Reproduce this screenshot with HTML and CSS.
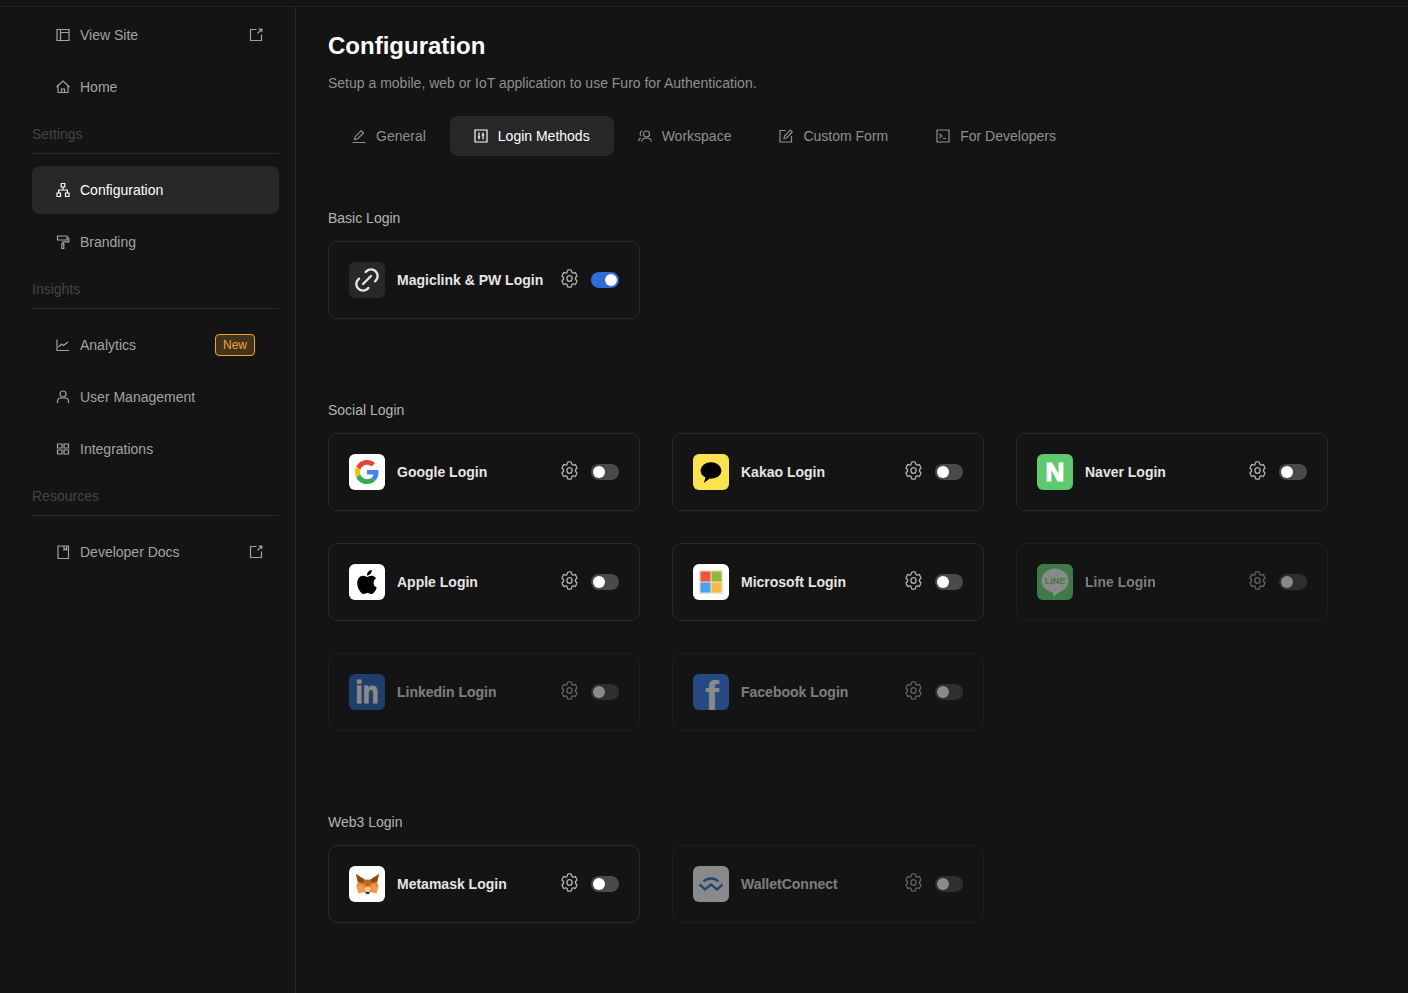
FILE: index.html
```html
<!DOCTYPE html>
<html lang="en">
<head>
  <meta charset="UTF-8" />
  <meta name="viewport" content="width=device-width, initial-scale=1.0" />
  <title>Configuration</title>
  <link rel="stylesheet" href="styles.css">
</head>
<body>
  <svg class="sprite" width="0" height="0">
    <symbol id="i-gear" viewBox="0 0 24 24">
      <g transform="translate(12 12) scale(.9 1) translate(-12 -12)">
        <path d="M9.594 3.94c.09-.542.56-.94 1.11-.94h2.593c.55 0 1.02.398 1.11.94l.213 1.281c.063.374.313.686.645.87.074.04.147.083.22.127.325.196.72.257 1.075.124l1.217-.456a1.125 1.125 0 0 1 1.37.49l1.296 2.247a1.125 1.125 0 0 1-.26 1.431l-1.003.827c-.293.241-.438.613-.43.992a7.723 7.723 0 0 1 0 .255c-.008.378.137.75.43.991l1.004.827c.424.35.534.955.26 1.43l-1.298 2.247a1.125 1.125 0 0 1-1.369.491l-1.217-.456c-.355-.133-.75-.072-1.076.124a6.47 6.47 0 0 1-.22.128c-.331.183-.581.495-.644.869l-.213 1.281c-.09.543-.56.94-1.11.94h-2.594c-.55 0-1.019-.398-1.11-.94l-.213-1.281c-.062-.374-.312-.686-.644-.87a6.52 6.52 0 0 1-.22-.127c-.325-.196-.72-.257-1.076-.124l-1.217.456a1.125 1.125 0 0 1-1.369-.49l-1.297-2.247a1.125 1.125 0 0 1 .26-1.431l1.004-.827c.292-.24.437-.613.43-.991a6.932 6.932 0 0 1 0-.255c.007-.38-.138-.751-.43-.992l-1.004-.827a1.125 1.125 0 0 1-.26-1.43l1.297-2.247a1.125 1.125 0 0 1 1.37-.491l1.216.456c.356.133.751.072 1.076-.124.072-.044.146-.086.22-.128.332-.183.582-.495.644-.869l.214-1.28Z"/>
        <circle cx="12" cy="12" r="3"/>
      </g>
    </symbol>
    <symbol id="i-ext" viewBox="0 0 16 16">
      <path d="M8.500 2.500H2.500v11h11V7.500"/>
      <path d="M9.500 6.500l4.300-4.300M10.800 2.200h3v3"/>
    </symbol>
  </svg>

  <div class="topline"></div>
  <div class="layout">
    <aside class="sidebar">
      <a class="nav-item">
        <svg class="ico lead" viewBox="0 0 16 16"><path d="M2 2.500h12v11H2zM5.500 2.500v11M5.500 5.500H14"/></svg>
        <span class="nav-text">View Site</span>
        <svg class="ico"><use href="#i-ext"/></svg>
      </a>
      <a class="nav-item">
        <svg class="ico lead" viewBox="0 0 16 16"><path d="M1.500 8L8 2l6.500 6M3 7v6.500h10V7M6.500 13.500V10h3v3.500"/></svg>
        <span class="nav-text">Home</span>
      </a>

      <div class="nav-label">Settings</div>
      <a class="nav-item active">
        <svg class="ico lead" viewBox="0 0 16 16"><path d="M6.200 1.500h3.600v3.500H6.200zM2 11h3.500v3.500H2zM10.500 11H14v3.500h-3.500zM3.700 11V8h8.600v3M8 5v3"/></svg>
        <span class="nav-text">Configuration</span>
      </a>
      <a class="nav-item">
        <svg class="ico lead" viewBox="0 0 16 16"><path d="M2.500 2h9.500v4H2.500zM12 4h1.800v3.800H7.800v2M6.800 10h2v4.500h-2z"/></svg>
        <span class="nav-text">Branding</span>
      </a>

      <div class="nav-label">Insights</div>
      <a class="nav-item">
        <svg class="ico lead" viewBox="0 0 16 16"><path d="M2 2.500v11h12"/><path d="M3.500 10l3-3 2 1.500L13 5"/></svg>
        <span class="nav-text">Analytics</span>
        <span class="badge">New</span>
      </a>
      <a class="nav-item">
        <svg class="ico lead" viewBox="0 0 16 16"><circle cx="8" cy="5" r="3"/><path d="M2.500 14v-1.500a3.500 3.500 0 0 1 3.500-3.500h4a3.500 3.500 0 0 1 3.500 3.500V14"/></svg>
        <span class="nav-text">User Management</span>
      </a>
      <a class="nav-item">
        <svg class="ico lead" viewBox="0 0 16 16"><path d="M2.500 3h4.500v4H2.500zM9 3h4.500v4H9zM2.500 9h4.500v4H2.500zM9 9h4.500v4H9z"/></svg>
        <span class="nav-text">Integrations</span>
      </a>

      <div class="nav-label">Resources</div>
      <a class="nav-item">
        <svg class="ico lead" viewBox="0 0 16 16"><path d="M3 2h10.500v12.500H3zM9 2v4l1.300-1 1.300 1V2"/></svg>
        <span class="nav-text">Developer Docs</span>
        <svg class="ico"><use href="#i-ext"/></svg>
      </a>
    </aside>

    <main class="main">
      <h1>Configuration</h1>
      <p class="subtitle">Setup a mobile, web or IoT application to use Furo for Authentication.</p>

      <div class="tabs">
        <a class="tab">
          <svg class="ico lead" viewBox="0 0 16 16"><path d="M1.500 14.500h13M3.500 11.500l.7-2.800 6-6 2.300 2.300-6 6z"/></svg>
          General
        </a>
        <a class="tab active">
          <svg class="ico lead" viewBox="0 0 16 16"><path d="M2 2h12v12H2zM6 4.500v7M10 4.500v7M4.800 9h2.400M8.800 7h2.400"/></svg>
          Login Methods
        </a>
        <a class="tab">
          <svg class="ico lead" viewBox="0 0 16 16"><circle cx="9.500" cy="6" r="3"/><path d="M4.500 13.500c.5-2.500 2.500-3.500 5-3.500s4.500 1 5 3.500M5.500 2.800a3 3 0 0 0-1.300 5.200M3.500 10c-1 .7-1.700 1.700-2 3"/></svg>
          Workspace
        </a>
        <a class="tab">
          <svg class="ico lead" viewBox="0 0 16 16"><path d="M8 2.500H2v11.500h11.500V8"/><path d="M6 10.500l.5-2.500 5.800-5.800 2 2-5.800 5.800z"/></svg>
          Custom Form
        </a>
        <a class="tab">
          <svg class="ico lead" viewBox="0 0 16 16"><path d="M2 2h12v12H2zM4.500 6l2.300 2-2.300 2M8 10.500h3"/></svg>
          For Developers
        </a>
      </div>

      <section class="group first">
        <h2>Basic Login</h2>
        <div class="card-grid">
          <div class="card">
            <span class="logo logo-link">
              <svg viewBox="0 0 24 24"><path d="M9 15l6-6M11 6l.463-.536a5 5 0 0 1 7.071 7.072l-.534.464M13 18l-.397.534a5.068 5.068 0 0 1-7.127 0a4.972 4.972 0 0 1 0-7.071l.524-.463"/></svg>
            </span>
            <span class="card-name">Magiclink &amp; PW Login</span>
            <svg class="gear"><use href="#i-gear"/></svg>
            <span class="switch on"></span>
          </div>
        </div>
      </section>

      <section class="group">
        <h2>Social Login</h2>
        <div class="card-grid">
          <div class="card">
            <span class="logo logo-white">
              <svg class="brand-24" viewBox="0 0 48 48">
                <path fill="#EA4335" d="M24 9.500c3.540 0 6.710 1.220 9.210 3.600l6.850-6.850C35.900 2.380 30.470 0 24 0 14.620 0 6.510 5.380 2.560 13.220l7.980 6.190C12.430 13.720 17.740 9.500 24 9.500z"/>
                <path fill="#4285F4" d="M46.980 24.550c0-1.570-.15-3.090-.38-4.550H24v9.020h12.940c-.58 2.960-2.260 5.480-4.780 7.180l7.730 6c4.510-4.180 7.090-10.360 7.090-17.650z"/>
                <path fill="#FBBC05" d="M10.530 28.590c-.48-1.450-.76-2.990-.76-4.590s.27-3.140.76-4.590l-7.980-6.190C.92 16.460 0 20.120 0 24c0 3.880.92 7.540 2.560 10.780l7.970-6.190z"/>
                <path fill="#34A853" d="M24 48c6.480 0 11.930-2.130 16.030-5.810l-7.730-6c-2.150 1.450-4.920 2.300-8.300 2.300-6.260 0-11.570-4.220-13.470-9.910l-7.980 6.190C6.510 42.620 14.620 48 24 48z"/>
              </svg>
            </span>
            <span class="card-name">Google Login</span>
            <svg class="gear"><use href="#i-gear"/></svg>
            <span class="switch"></span>
          </div>
          <div class="card">
            <span class="logo logo-kakao">
              <svg class="brand-24" viewBox="0 0 24 24">
                <ellipse cx="12" cy="10.500" rx="10.500" ry="8.300" fill="#000"/>
                <path d="M7 16l-2.200 7 6-4.500z" fill="#000"/>
              </svg>
            </span>
            <span class="card-name">Kakao Login</span>
            <svg class="gear"><use href="#i-gear"/></svg>
            <span class="switch"></span>
          </div>
          <div class="card">
            <span class="logo logo-naver">
              <svg viewBox="0 0 36 36"><text x="18" y="27" class="mark-n">N</text></svg>
            </span>
            <span class="card-name">Naver Login</span>
            <svg class="gear"><use href="#i-gear"/></svg>
            <span class="switch"></span>
          </div>

          <div class="card">
            <span class="logo logo-white">
              <svg class="brand-24" viewBox="0 0 24 24">
                <path fill="#000" d="M12.152 6.896c-.948 0-2.415-1.078-3.960-1.040-2.040.027-3.910 1.183-4.961 3.014-2.117 3.675-.546 9.103 1.519 12.090 1.013 1.454 2.208 3.090 3.792 3.039 1.520-.065 2.090-.987 3.935-.987 1.831 0 2.350.987 3.960.948 1.637-.026 2.676-1.480 3.676-2.948 1.156-1.688 1.636-3.325 1.662-3.415-.039-.013-3.182-1.221-3.220-4.857-.026-3.040 2.480-4.494 2.597-4.559-1.429-2.090-3.623-2.324-4.390-2.376-2-.156-3.675 1.090-4.610 1.090zM15.530 3.830c.843-1.012 1.400-2.427 1.245-3.830-1.207.052-2.662.805-3.532 1.818-.780.896-1.454 2.338-1.273 3.714 1.338.104 2.715-.688 3.559-1.701"/>
              </svg>
            </span>
            <span class="card-name">Apple Login</span>
            <svg class="gear"><use href="#i-gear"/></svg>
            <span class="switch"></span>
          </div>
          <div class="card">
            <span class="logo logo-white">
              <svg class="brand-24" viewBox="0 0 24 24">
                <rect x="0" y="0" width="24" height="24" fill="#f3e2d0"/>
                <rect x="1.500" y="1.500" width="10" height="10" fill="#E8593A"/>
                <rect x="12.500" y="1.500" width="10" height="10" fill="#8DB83A"/>
                <rect x="1.500" y="12.500" width="10" height="10" fill="#45A4EC"/>
                <rect x="12.500" y="12.500" width="10" height="10" fill="#F7B844"/>
              </svg>
            </span>
            <span class="card-name">Microsoft Login</span>
            <svg class="gear"><use href="#i-gear"/></svg>
            <span class="switch"></span>
          </div>
          <div class="card disabled">
            <span class="logo logo-line">
              <svg viewBox="0 0 36 36">
                <ellipse cx="18" cy="16.500" rx="13.500" ry="12" fill="#fff"/>
                <path d="M15 27l2 5.500 7-6z" fill="#fff"/>
                <text x="18" y="20" class="mark-line">LINE</text>
              </svg>
            </span>
            <span class="card-name">Line Login</span>
            <svg class="gear"><use href="#i-gear"/></svg>
            <span class="switch"></span>
          </div>

          <div class="card disabled">
            <span class="logo logo-linkedin">
              <svg viewBox="0 0 36 36"><text x="18" y="24.500" class="mark-in" transform="scale(1 1.200)">in</text></svg>
            </span>
            <span class="card-name">Linkedin Login</span>
            <svg class="gear"><use href="#i-gear"/></svg>
            <span class="switch"></span>
          </div>
          <div class="card disabled">
            <span class="logo logo-facebook">
              <svg viewBox="0 0 36 36"><text x="19" y="37" class="mark-f">f</text></svg>
            </span>
            <span class="card-name">Facebook Login</span>
            <svg class="gear"><use href="#i-gear"/></svg>
            <span class="switch"></span>
          </div>
        </div>
      </section>

      <section class="group">
        <h2>Web3 Login</h2>
        <div class="card-grid">
          <div class="card">
            <span class="logo logo-white">
              <svg class="brand-fox" viewBox="0 0 28 26">
                <path fill="#EC8A36" d="M1 1l10 6.500h6L27 1l-2 9 1.500 5-2.500 8-5.500-1.500L16 25h-4l-2.500-3.500L4 23l-2.500-8L3 10z"/>
                <path fill="#8A4B1E" d="M1 1l10 6.500-2 4.500-6-2zM27 1L17 7.500l2 4.500 6-2z"/>
                <path fill="#B9682A" d="M11 7.500h6l1.500 5-4.500 3-4.500-3z"/>
                <path fill="#F39A4C" d="M1.500 15l7-1 1 7.500-5.500 1.500zM26.500 15l-7-1-1 7.500 5.500 1.500z"/>
                <path fill="#F6C79A" d="M10 17l4-1.500 4 1.500-2 4.500h-4z"/>
                <path fill="#EFE4D8" d="M9.500 21.500h9L16 25h-4z"/>
                <path fill="#161616" d="M11.500 21.500h5L15.500 23.500h-3z"/>
              </svg>
            </span>
            <span class="card-name">Metamask Login</span>
            <svg class="gear"><use href="#i-gear"/></svg>
            <span class="switch"></span>
          </div>
          <div class="card disabled">
            <span class="logo logo-white">
              <svg class="brand-24" viewBox="0 0 24 24">
                <path class="wave" d="M4.500 9.500c4-4 11-4 15 0M.5 12.500l5.500 5 6-5 6 5 5.500-5"/>
              </svg>
            </span>
            <span class="card-name">WalletConnect</span>
            <svg class="gear"><use href="#i-gear"/></svg>
            <span class="switch"></span>
          </div>
        </div>
      </section>
    </main>
  </div>
</body>
</html>
```

FILE: styles.css
```css
* {
  box-sizing: border-box;
}
html, body {
  height: 100%;
}
body {
  margin: 0;
  background-color: #141414;
  color: #a3a3a3;
  font-family: "Liberation Sans", Arial, sans-serif;
  font-size: 14px;
  line-height: 20px;
  overflow: hidden;
}
.sprite {
  position: absolute;
}
.topline {
  height: 7px;
  border-bottom: 1px solid #232323;
}
.layout {
  display: flex;
  height: calc(100% - 7px);
}

/* sidebar */
.sidebar {
  width: 296px;
  flex: none;
  padding: 4px 16px 0 32px;
  border-right: 1px solid #2a2a2a;
}
.nav-item {
  display: flex;
  align-items: center;
  gap: 8px;
  height: 48px;
  margin-bottom: 4px;
  padding: 0 15px 0 24px;
  border-radius: 8px;
  color: #a3a3a3;
}
.nav-item:last-child {
  margin-bottom: 0;
}
.nav-item.active {
  background-color: #282828;
  color: #fff;
}
.nav-text {
  flex: 1;
}
.nav-label {
  margin-top: 13px;
  padding-bottom: 9px;
  margin-bottom: 12px;
  border-bottom: 1px solid #2a2a2a;
  color: #444;
}
.ico {
  width: 16px;
  height: 16px;
  flex: none;
  fill: none;
  stroke: currentColor;
  stroke-width: 1.200;
}
.ico.lead {
  margin: 0 1px 0 -1px;
}
.badge {
  height: 22px;
  margin-right: 9px;
  padding: 0 7px;
  border: 1px solid #eea62e;
  border-radius: 4px;
  background-color: #43331a;
  color: #eea62e;
  font-size: 12px;
  line-height: 20px;
}

/* main */
.main {
  flex: 1;
  padding: 23px 0 0 32px;
}
h1 {
  margin: 0;
  color: #fff;
  font-size: 24px;
  line-height: 32px;
  font-weight: bold;
}
.subtitle {
  margin: 11px 0 0;
  color: #8f8f8f;
}
.tabs {
  display: flex;
  margin-top: 23px;
}
.tab {
  display: flex;
  align-items: center;
  gap: 8px;
  height: 40px;
  padding: 0 24px;
  border-radius: 8px;
  color: #8f8f8f;
}
.tab.active {
  background-color: #282828;
  color: #fff;
}
.group {
  margin-top: 81px;
}
.group.first {
  margin-top: 52px;
}
h2 {
  margin: 0 0 13px;
  color: #b5b5b5;
  font-size: 14px;
  line-height: 20px;
  font-weight: normal;
}
.card-grid {
  display: grid;
  grid-template-columns: repeat(3, 312px);
  gap: 32px;
}
.card {
  display: flex;
  align-items: center;
  height: 78px;
  padding: 0 20px;
  border: 1px solid #2a2a2a;
  border-radius: 10px;
}
.card.disabled {
  opacity: 0.5;
}
.logo {
  display: flex;
  align-items: center;
  justify-content: center;
  width: 36px;
  height: 36px;
  flex: none;
  overflow: hidden;
  border-radius: 6px;
}
.logo svg {
  width: 36px;
  height: 36px;
}
.logo .brand-24 {
  width: 24px;
  height: 24px;
}
.logo .brand-fox {
  width: 25px;
  height: 23px;
}
.logo-link {
  background-color: #282828;
}
.logo-link svg {
  width: 32px;
  height: 32px;
  fill: none;
  stroke: #e5e5e5;
  stroke-width: 1.800;
  stroke-linecap: round;
  stroke-linejoin: round;
}
.logo-white {
  background-color: #fff;
}
.logo-kakao {
  background-color: #fee14e;
}
.logo-naver {
  background-color: #5ec96f;
}
.logo-line {
  background-color: #69e07b;
}
.logo-linkedin {
  background-color: #2a68c4;
}
.logo-facebook {
  background-color: #3a7ff0;
}
.mark-n {
  fill: #fff;
  stroke: #fff;
  stroke-width: 1.200;
  font-size: 26px;
  font-weight: bold;
  text-anchor: middle;
}
.mark-line {
  fill: #69e07b;
  font-size: 9px;
  font-weight: bold;
  text-anchor: middle;
}
.mark-in {
  fill: #fff;
  stroke: #fff;
  stroke-width: 0.800;
  font-size: 26px;
  font-weight: bold;
  text-anchor: middle;
}
.mark-f {
  fill: #fff;
  font-size: 42px;
  font-weight: bold;
  text-anchor: middle;
}
.wave {
  fill: none;
  stroke: #2f7bd8;
  stroke-width: 2.400;
}
.card-name {
  flex: 1;
  margin-left: 12px;
  color: #e5e5e5;
  font-weight: bold;
}
.gear {
  width: 23px;
  height: 23px;
  flex: none;
  margin: 0 10px 3px 0;
  fill: none;
  stroke: #b0b0b0;
  stroke-width: 1.500;
}
.switch {
  position: relative;
  width: 28px;
  height: 16px;
  flex: none;
  border-radius: 8px;
  background-color: #4a4a4a;
}
.switch::after {
  content: "";
  position: absolute;
  top: 2px;
  left: 2px;
  width: 12px;
  height: 12px;
  border-radius: 50%;
  background-color: #fff;
}
.switch.on {
  background-color: #2f6cd6;
}
.switch.on::after {
  left: 14px;
}
```
